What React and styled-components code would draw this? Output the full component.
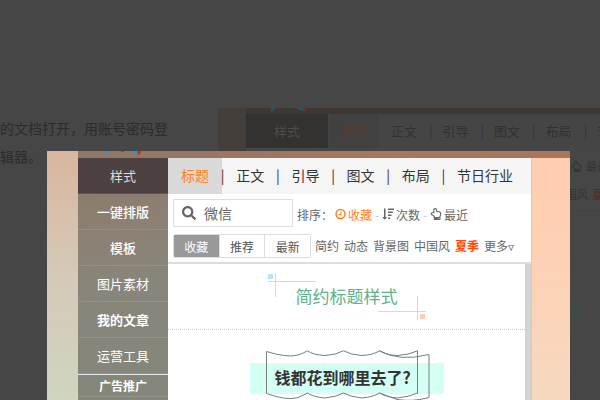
import { useState } from "react";
import styled, { createGlobalStyle } from "styled-components";
import { FaRegHandPointUp, FaSearch } from "react-icons/fa";

const menu = [
  { name: "样式" },
  { name: "一键排版", weight: 500 },
  { name: "模板", weight: 500 },
  { name: "图片素材" },
  { name: "我的文章", weight: 700 },
  { name: "运营工具" },
];
const tabs = ["标题", "正文", "引导", "图文", "布局", "节日行业"];
const sorts = [
  { name: "收藏", icon: <ClockIcon /> },
  { name: "次数", icon: <AmountIcon /> },
  { name: "最近", icon: <FaRegHandPointUp /> },
];
const filters = ["收藏", "推荐", "最新"];
const tags = ["简约", "动态", "背景图", "中国风", "夏季", "更多▿"];

export default function App() {
  return (
    <Page>
      <GlobalStyle />
      <Article>
        <Paragraph>
          的文档打开，用账号密码登
          <br />
          辑器。
        </Paragraph>
        <Thumbnail />
      </Article>
      <Overlay>
        <Editor />
      </Overlay>
    </Page>
  );
}

function Logo() {
  return (
    <svg width="36" height="4" viewBox="0 0 36 4" aria-hidden="true">
      <path d="M0 0h4.500L1.500 3.600H0z" fill="#0a9fe0" />
      <path d="M15.500 0h4l-2 1.600z" fill="#14803c" />
      <path d="M25 0h7.500v3.600z" fill="#0a9fe0" />
      <path d="M32.500 0H36l-1 3.600h-2.500z" fill="#e02412" />
    </svg>
  );
}

function ClockIcon() {
  return (
    <svg width="11" height="12" viewBox="0 0 11 12" fill="none" stroke="currentColor">
      <circle cx="5.500" cy="6" r="4.500" strokeWidth="1.500" />
      <path d="M6 3.500v3H3.500" />
    </svg>
  );
}

function AmountIcon() {
  return (
    <svg width="12" height="12" viewBox="0 0 12 12" fill="currentColor">
      <path d="M2 .5h1.500v8.500h1.700L2.700 11.800.2 9H2z" />
      <path d="M6 .5h6v1.500H6zM6 3.500h4.800V5H6zM6 6.500h3.500V8H6zM6 9.500h2V11H6z" />
    </svg>
  );
}

function Thumbnail() {
  return (
    <Thumb>
      <ThumbTop>
        <Logo />
      </ThumbTop>
      <ThumbNav>
        <ThumbMenu>样式</ThumbMenu>
        {tabs.map((tab, i) => (
          <ThumbTab key={tab} $active={i === 0}>
            {tab}
          </ThumbTab>
        ))}
      </ThumbNav>
      <ThumbBody>
        <ThumbRow>
          <FaRegHandPointUp />
          <span>最近</span>
        </ThumbRow>
        <ThumbRow>
          <span>国风</span>
          <ThumbHot>夏季</ThumbHot>
        </ThumbRow>
      </ThumbBody>
      <ThumbBand />
    </Thumb>
  );
}

function Editor() {
  const [tab, setTab] = useState(tabs[0]);
  const [section, setSection] = useState(menu[0].name);
  const [filter, setFilter] = useState(filters[0]);
  const [sort, setSort] = useState(sorts[0].name);
  const [search, setSearch] = useState("微信");

  return (
    <Window>
      <LeftEdge />
      <Main>
        <TopBar>
          <Logo />
        </TopBar>
        <Columns>
          <Sidebar>
            {menu.map(({ name, weight }) => (
              <MenuItem
                key={name}
                $active={name === section}
                $weight={weight}
                onClick={() => setSection(name)}
              >
                {name}
              </MenuItem>
            ))}
            <Promo>广告推广</Promo>
          </Sidebar>
          <Content>
            <Nav>
              {tabs.map((name, i) => [
                i > 0 && <Divider key={i}>|</Divider>,
                <Tab
                  key={name}
                  $active={name === tab}
                  onClick={() => setTab(name)}
                >
                  {name}
                </Tab>,
              ])}
            </Nav>
            <Tools>
              <ToolRow>
                <SearchBox>
                  <FaSearch />
                  <input
                    aria-label="微信"
                    value={search}
                    onChange={(e) => setSearch(e.target.value)}
                  />
                </SearchBox>
                <SortList>
                  <SortLabel>排序：</SortLabel>
                  {sorts.map(({ name, icon }, i) => [
                    i > 0 && <Dash key={i}>-</Dash>,
                    <SortButton
                      key={name}
                      $active={name === sort}
                      onClick={() => setSort(name)}
                    >
                      {icon}
                      {name}
                    </SortButton>,
                  ])}
                </SortList>
              </ToolRow>
              <ToolRow>
                <FilterGroup>
                  {filters.map((name) => (
                    <Filter
                      key={name}
                      $active={name === filter}
                      onClick={() => setFilter(name)}
                    >
                      {name}
                    </Filter>
                  ))}
                </FilterGroup>
                <TagList>
                  {tags.map((tag) => (
                    <Tag key={tag} href="#" $hot={tag === "夏季"}>
                      {tag}
                    </Tag>
                  ))}
                </TagList>
              </ToolRow>
            </Tools>
            <Samples>
              <Sample>
                <CornerLines />
                <SimpleTitle>简约标题样式</SimpleTitle>
              </Sample>
              <Sample>
                <Band />
                <Scroll />
                <ScrollTitle>钱都花到哪里去了?</ScrollTitle>
              </Sample>
            </Samples>
          </Content>
        </Columns>
      </Main>
    </Window>
  );
}

function CornerLines() {
  return (
    <svg width="158" height="48" viewBox="0 0 158 48" aria-hidden="true">
      <g fill="#b0e8fb">
        <rect x="0" y="1" width="5" height="5" />
        <rect x="7" y="0" width="1" height="24" />
        <rect x="0" y="8" width="48" height="1" />
      </g>
      <g fill="#fbcdb3">
        <rect x="149" y="23" width="1" height="24" />
        <rect x="110" y="38" width="48" height="1" />
        <rect x="152" y="41" width="5" height="5" />
      </g>
    </svg>
  );
}

function Scroll() {
  return (
    <svg
      width="166"
      height="56"
      viewBox="0 0 166 56"
      fill="none"
      stroke="#7a7e7d"
      aria-hidden="true"
    >
      <path d="M2.500 43.500V1.500Q23 8 34 5Q39 3.500 43.500 .8Q49 5 61 5.500Q72 5 79.500 .8Q87 5 98 5.500Q109 5 115.500 .8Q122 5 133 5.500Q145 5 153.500 .8V43.500" />
      <path d="M2.500 43.500Q23 51 34 47.500Q39 45.500 43.500 43Q49 47 61 48Q72 47 79.500 43Q87 47 98 48Q109 47 115.500 43Q122 47 133 48Q145 47 153.500 43" />
      <path d="M115.500 .8Q135 12 165 4.500V47.500Q149 52 133 49.500L115.500 43" />
    </svg>
  );
}

const GlobalStyle = createGlobalStyle`
  * {
    box-sizing: border-box;
  }
  body {
    margin: 0;
    font-family: "Noto Sans CJK SC", sans-serif;
  }
  button, input {
    margin: 0;
    padding: 0;
    border: none;
    background: none;
    font: inherit;
    color: inherit;
  }
  button {
    cursor: pointer;
  }
`;
const Page = styled.div`
  position: relative;
  height: 100vh;
  overflow: hidden;
  background: #464646;
`;
const Article = styled.div`
  display: flex;
  align-items: flex-start;
  padding-top: 108px;
`;
const Paragraph = styled.p`
  flex: 0 0 218px;
  margin: 0;
  padding-top: 6px;
  font-size: 14px;
  line-height: 28px;
  color: #2c2c2c;
`;
const Thumb = styled.div`
  flex: 1;
  min-width: 0;
  padding-left: 28px;
  background: #443f3b;
  font-size: 13px;
  color: #333;
`;
const ThumbTop = styled.div`
  height: 6px;
  padding-left: 25px;
  background: #3e3834;
  svg {
    display: block;
    opacity: 0.25;
  }
`;
const ThumbNav = styled.div`
  display: flex;
  gap: 1px;
  height: 34px;
  line-height: 34px;
  overflow: hidden;
  background: #454545;
`;
const ThumbMenu = styled.span`
  flex: 0 0 82px;
  background: #343231;
  color: #4c4b4a;
  text-align: center;
`;
const ThumbTab = styled.span`
  flex: none;
  padding: 0 12px;
  background: ${({ $active }) => ($active ? "#424141" : "none")};
  color: ${({ $active }) => ($active ? "#573c2d" : "#313131")};
  & + & {
    padding-left: 11px;
  }
  & + &::before {
    content: "|";
    margin: 0 10px 0 -12px;
    color: #35303a;
  }
`;
const ThumbBody = styled.div`
  display: flex;
  flex-direction: column;
  gap: 8px;
  padding: 8px 0 6px 320px;
  overflow: hidden;
  background: #464646;
  border-bottom: 1px solid #424242;
`;
const ThumbRow = styled.div`
  display: flex;
  align-items: center;
  gap: 4px;
  height: 20px;
  font-size: 11px;
  white-space: nowrap;
  svg {
    flex: none;
    margin-left: 5px;
  }
`;
const ThumbHot = styled.span`
  color: #552819;
`;
const ThumbBand = styled.div`
  height: 190px;
  background: linear-gradient(90deg, #434746 336px, #464646 336px) 0 92px / 100%
    28px no-repeat #464646;
`;
const Overlay = styled.div`
  position: absolute;
  inset: 0;
  display: flex;
  padding: 151px 30px 0 47px;
`;
const Window = styled.div`
  flex: 1;
  display: flex;
  min-width: 0;
  overflow: hidden;
`;
const LeftEdge = styled.div`
  flex: 0 0 31px;
  background: linear-gradient(#d9b69f, #d5c9b8 50%, #cfd5c0);
`;
const Main = styled.div`
  flex: 1;
  display: flex;
  flex-direction: column;
  min-width: 0;
`;
const TopBar = styled.div`
  flex: 0 0 7px;
  padding-left: 27px;
  background: linear-gradient(90deg, #8e7869, #a9755b 60%, #a8765d);
  svg {
    display: block;
  }
`;
const Columns = styled.div`
  flex: 1;
  display: flex;
  min-height: 0;
  padding-right: 38px;
  background: linear-gradient(#ffccb0, #fdd2b7 50%, #f5d8bf);
`;
const Sidebar = styled.aside`
  flex: 0 0 90px;
  display: flex;
  flex-direction: column;
  background: linear-gradient(165deg, #8f7968, #89857a 50%, #84877a);
`;
const MenuItem = styled.button`
  flex: 0 0 36px;
  border-bottom: 1px solid rgba(255, 255, 255, 0.1);
  background: ${({ $active }) => ($active ? "#4c4140" : "none")};
  color: ${({ $active }) => ($active ? "#ddd" : "#fff")};
  font-size: 13px;
  font-weight: ${({ $weight }) => $weight || 400};
`;
const Promo = styled.button`
  flex: 0 0 23px;
  border-top: 1px solid #e8e8f0;
  border-bottom: 1px solid rgba(255, 255, 255, 0.1);
  color: #fff;
  font-size: 12px;
  font-weight: 700;
`;
const Content = styled.main`
  flex: 1;
  display: flex;
  flex-direction: column;
  min-width: 0;
  border-right: 1px solid #ccc;
  background: #fff;
`;
const Nav = styled.nav`
  display: flex;
  height: 36px;
  padding-right: 5px;
  background: #f5f5f5;
  color: #333;
  font-size: 14px;
`;
const Tab = styled.button`
  flex: none;
  padding: 0 13px 2px;
  background: ${({ $active }) => ($active ? "#d9d9d9" : "none")};
  color: ${({ $active }) => ($active ? "#ff8125" : "#333")};
`;
const Divider = styled.span`
  flex: 1 1 0;
  display: flex;
  justify-content: center;
  min-width: 0;
  color: #3b2340;
  line-height: 34px;
`;
const Tools = styled.div`
  display: flex;
  flex-direction: column;
  gap: 7px;
  padding: 5px 5px 4px;
  border-bottom: 2px solid #ddd;
  color: #666;
  font-size: 12px;
  white-space: nowrap;
`;
const ToolRow = styled.div`
  display: flex;
  align-items: center;
  gap: 4px;
`;
const SearchBox = styled.label`
  display: flex;
  align-items: center;
  gap: 8px;
  width: 120px;
  height: 28px;
  padding-left: 8px;
  border: 1px solid #ddd;
  font-size: 14px;
  svg {
    flex: none;
    color: #666;
  }
  input {
    width: 100%;
    min-width: 0;
    height: 24px;
  }
`;
const SortList = styled.div`
  display: flex;
  align-items: center;
  padding-top: 2px;
`;
const SortLabel = styled.span`
  margin-right: 2px;
`;
const SortButton = styled.button`
  display: flex;
  align-items: center;
  gap: 2px;
  color: ${({ $active }) => ($active ? "#ff8125" : "#666")};
`;
const Dash = styled.span`
  width: 10px;
  color: #ccc;
  text-align: center;
`;
const FilterGroup = styled.div`
  display: flex;
  width: 138px;
  height: 24px;
  overflow: hidden;
  border: 1px solid #ddd;
  border-radius: 2px;
`;
const Filter = styled.button`
  flex: 1;
  background: ${({ $active }) => ($active ? "#999" : "#fff")};
  color: ${({ $active }) => ($active ? "#fff" : "#555")};
  & + & {
    border-left: 1px solid #ddd;
  }
`;
const TagList = styled.div`
  display: flex;
  gap: 5px;
  padding-bottom: 2px;
`;
const Tag = styled.a`
  color: ${({ $hot }) => ($hot ? "#ff4a00" : "#666")};
  font-weight: ${({ $hot }) => ($hot ? 700 : 400)};
  text-decoration: none;
`;
const Samples = styled.div`
  flex: 1;
  min-height: 0;
  overflow: hidden;
  border-right: 6px solid #d3d3d3;
`;
const Sample = styled.section`
  display: grid;
  place-items: center;
  padding: 9px 0 8px;
  border-bottom: 1px dotted #ccc;
  > * {
    grid-area: 1 / 1;
  }
  & + & {
    padding: 20px 0;
  }
`;
const SimpleTitle = styled.h2`
  margin: 0;
  padding-bottom: 2px;
  color: #60b18c;
  font-size: 17px;
  font-weight: 400;
  line-height: 24px;
`;
const Band = styled.div`
  width: 194px;
  height: 31px;
  background: #d3fff4;
`;
const ScrollTitle = styled.h2`
  margin: 0;
  padding: 0 8px 2px 0;
  color: #333;
  font-size: 16px;
  font-weight: 700;
  line-height: 24px;
`;
